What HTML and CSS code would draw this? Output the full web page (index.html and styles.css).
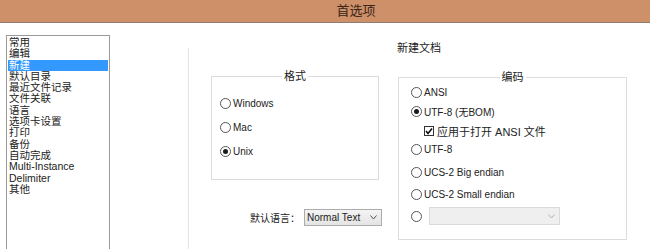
FILE: index.html
```html
<!DOCTYPE html>
<html lang="zh">
<head>
  <meta charset="UTF-8">
  <title>首选项</title>
  <link rel="stylesheet" href="styles.css">
</head>
<body>

  <div class="titlebar">首选项</div>

  <div class="main">
    <ul class="cat-list">
      <li>常用</li>
      <li>编辑</li>
      <li class="selected">新建</li>
      <li>默认目录</li>
      <li>最近文件记录</li>
      <li>文件关联</li>
      <li>语言</li>
      <li>选项卡设置</li>
      <li>打印</li>
      <li>备份</li>
      <li>自动完成</li>
      <li>Multi-Instance</li>
      <li>Delimiter</li>
      <li>其他</li>
    </ul>

    <div class="pane">
      <div class="pane-left">
        <fieldset class="group group-format">
          <legend>格式</legend>
          <div class="opt"><span class="radio"></span>Windows</div>
          <div class="opt"><span class="radio"></span>Mac</div>
          <div class="opt"><span class="radio on"></span>Unix</div>
        </fieldset>

        <div class="lang-row">
          <span class="lang-label">默认语言：</span>
          <div class="select">
            <span>Normal Text</span>
            <svg class="chev" width="7" height="5" viewBox="0 0 7 5"><polyline points="0.5,0.5 3.5,4 6.5,0.5" fill="none" stroke="#555" stroke-width="1"/></svg>
          </div>
        </div>
      </div>

      <div class="pane-right">
        <div class="pane-title">新建文档</div>
        <fieldset class="group group-enc">
          <legend>编码</legend>
          <div class="opt"><span class="radio"></span>ANSI</div>
          <div class="opt"><span class="radio on"></span>UTF-8 (无BOM)</div>
          <div class="opt sub">
            <svg class="check" width="10" height="10" viewBox="0 0 10 10"><rect x="0.5" y="0.5" width="9" height="9" fill="#fff" stroke="#333"/><polyline points="2,5 4,7.5 8,2.5" fill="none" stroke="#111" stroke-width="1.6"/></svg>
            <span class="cjk">应用于打开 ANSI 文件</span>
          </div>
          <div class="opt"><span class="radio"></span>UTF-8</div>
          <div class="opt wide first-wide"><span class="radio"></span>UCS-2 Big endian</div>
          <div class="opt wide"><span class="radio"></span>UCS-2 Small endian</div>
          <div class="opt wide">
            <span class="radio"></span>
            <div class="select disabled">
              <span></span>
              <svg class="chev" width="7" height="5" viewBox="0 0 7 5"><polyline points="0.5,0.5 3.5,4 6.5,0.5" fill="none" stroke="#b0b0b0" stroke-width="1"/></svg>
            </div>
          </div>
        </fieldset>
      </div>
    </div>
  </div>

</body>
</html>
```

FILE: styles.css
```css
body {
  margin: 0;
  background-color: #fff;
  font-family: 'Liberation Sans', 'Noto Sans CJK SC', sans-serif;
  font-size: 10px;
  color: #222;
  overflow: hidden;
}

.titlebar {
  height: 22px;
  line-height: 22px;
  background-color: #cd9068;
  border-bottom: 1px solid #8f7d72;
  text-align: center;
  padding-left: 62px;
  font-size: 13px;
  color: #3a2519;
}

.main {
  display: flex;
  padding-top: 12px;
}

.cat-list {
  list-style: none;
  margin: 0 0 0 6px;
  padding: 1px;
  width: 104px;
  height: 214px;
  box-sizing: border-box;
  border: 1px solid #9a9a9a;
  border-bottom: none;
  flex-shrink: 0;
}

.cat-list li {
  height: 11.3px;
  line-height: 11.3px;
  padding-left: 1px;
  font-size: 10.5px;
  white-space: nowrap;
}

.cat-list li.selected {
  background-color: #3399ff;
  color: #fff;
}

.pane {
  display: flex;
  margin-left: 78px;
}

.pane-left {
  width: 202px;
  box-sizing: border-box;
  margin-top: 13px;
  padding-left: 22px;
  border-left: 1px solid #e3e3e3;
  height: 201px;
}

.pane-right {
  margin-top: 6px;
  padding-left: 7px;
}

.pane-title {
  font-size: 11px;
  line-height: 14px;
}

.group {
  margin: 0;
  border: 1px solid #dcdcdc;
  box-sizing: border-box;
}

.group legend {
  margin: 0 auto;
  padding: 0 2px;
  font-size: 11px;
  line-height: 12px;
}

.group-format {
  width: 168px;
  margin-top: 22px;
  padding: 9px 8px 16px;
}

.group-format .opt {
  height: 24px;
}

.group-enc {
  width: 229px;
  margin: 16px 0 0 1px;
  padding: 0 12px 12px;
}

.opt {
  display: flex;
  align-items: center;
  height: 19px;
  gap: 2px;
  white-space: nowrap;
}

.opt.sub {
  padding-left: 13px;
  gap: 3px;
}

.opt.wide {
  height: 22px;
}

.opt.first-wide {
  margin-top: 2px;
}

.cjk {
  font-size: 11px;
}

.radio {
  width: 11px;
  height: 11px;
  box-sizing: border-box;
  border: 1px solid #555;
  border-radius: 50%;
  background-color: #fff;
  display: flex;
  align-items: center;
  justify-content: center;
  flex-shrink: 0;
}

.radio.on::after {
  content: '';
  width: 5px;
  height: 5px;
  border-radius: 50%;
  background-color: #1a1a1a;
}

.check {
  flex-shrink: 0;
}

.lang-row {
  display: flex;
  align-items: center;
  gap: 4px;
  margin-top: 29px;
  padding-left: 39px;
}

.select {
  width: 78px;
  height: 17px;
  box-sizing: border-box;
  border: 1px solid #acacac;
  background: linear-gradient(#f4f4f4, #e4e4e4);
  display: flex;
  align-items: center;
  justify-content: space-between;
  padding: 0 4px 0 2px;
}

.select.disabled {
  width: 131px;
  height: 18px;
  margin-left: 5px;
  border-color: #dadada;
  background: #efefef;
}
```
